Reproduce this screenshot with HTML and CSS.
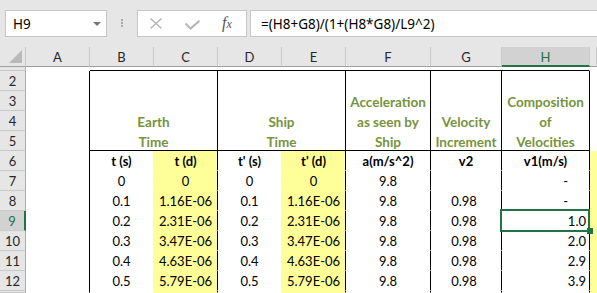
FILE: index.html
```html
<!DOCTYPE html>
<html lang="en">
<head>
    <meta charset="UTF-8">
    <title>Relativistic velocities</title>
    <link rel="stylesheet" href="styles.css">
</head>
<body>
<div class="formula-bar">
    <div class="name-box">
        <span>H9</span>
        <span class="caret"></span>
    </div>
    <div class="grip"><i></i><i></i><i></i></div>
    <div class="fx-buttons">
        <svg class="icon-cancel" width="12" height="11" viewBox="0 0 12 11">
            <path d="M0.5 0.5 L11.5 10.5 M11.5 0.5 L0.5 10.5" stroke="#b0b0b0" stroke-width="1.2" fill="none"/>
        </svg>
        <svg class="icon-enter" width="15" height="10" viewBox="0 0 15 10">
            <path d="M0.5 3.5 L5.5 8.6 L14.5 0.8" stroke="#b4b4b4" stroke-width="2" fill="none"/>
        </svg>
        <span class="fx"><i>f</i><i class="fx-x">x</i></span>
    </div>
    <div class="formula-input">=(H8+G8)/(1+(H8*G8)/L9^2)</div>
</div>

<div class="sheet">
    <!-- column headers -->
    <div class="corner">
        <svg width="13" height="13" viewBox="0 0 13 13"><path d="M13 0 L13 13 L0 13 Z" fill="#b9b9b9"/></svg>
    </div>
    <div class="hd">A</div>
    <div class="hd">B</div>
    <div class="hd">C</div>
    <div class="hd">D</div>
    <div class="hd">E</div>
    <div class="hd">F</div>
    <div class="hd">G</div>
    <div class="hd hd-sel">H</div>
    <div class="hd"></div>

    <!-- row 1 (squeezed) -->
    <div class="rh"></div>
    <div class="c"></div>
    <div class="c top-edge"></div>
    <div class="c"></div>

    <!-- rows 2-5: titles -->
    <div class="rh">2</div>
    <div class="c col-a"></div>
    <div class="c title span-2 br bb"><span>Earth<br>Time</span></div>
    <div class="c title span-2 br bb"><span>Ship<br>Time</span></div>
    <div class="c title br bb"><span>Acceleration<br>as seen by<br>Ship</span></div>
    <div class="c title br bb"><span>Velocity<br>Increment</span></div>
    <div class="c title br bb"><span>Composition<br>of<br>Velocities</span></div>
    <div class="c title-rest"></div>
    <div class="rh">3</div>
    <div class="rh">4</div>
    <div class="rh">5</div>

    <!-- row 6: units -->
    <div class="rh">6</div>
    <div class="c unit by">t (s)</div>
    <div class="c unit yl br">t (d)</div>
    <div class="c unit by">t' (s)</div>
    <div class="c unit yl br">t' (d)</div>
    <div class="c unit br">a(m/s^2)</div>
    <div class="c unit br">v2</div>
    <div class="c unit br">v1(m/s)</div>
    <div class="c yl col-i"></div>

    <div class="rh">7</div>
    <div class="c num by">0</div>
    <div class="c num yl br">0</div>
    <div class="c num by">0</div>
    <div class="c num yl br">0</div>
    <div class="c num br">9.8</div>
    <div class="c num g br"></div>
    <div class="c right br"><span class="dash">-</span></div>

    <div class="rh">8</div>
    <div class="c num by">0.1</div>
    <div class="c num yl br">1.16E-06</div>
    <div class="c num by">0.1</div>
    <div class="c num yl br">1.16E-06</div>
    <div class="c num br">9.8</div>
    <div class="c num g br">0.98</div>
    <div class="c right br"><span class="dash">-</span></div>

    <div class="rh rh-sel">9</div>
    <div class="c num by">0.2</div>
    <div class="c num yl br">2.31E-06</div>
    <div class="c num by">0.2</div>
    <div class="c num yl br">2.31E-06</div>
    <div class="c num br">9.8</div>
    <div class="c num g br">0.98</div>
    <div class="c right br active">1.0</div>

    <div class="rh">10</div>
    <div class="c num by">0.3</div>
    <div class="c num yl br">3.47E-06</div>
    <div class="c num by">0.3</div>
    <div class="c num yl br">3.47E-06</div>
    <div class="c num br">9.8</div>
    <div class="c num g br">0.98</div>
    <div class="c right br">2.0</div>

    <div class="rh">11</div>
    <div class="c num by">0.4</div>
    <div class="c num yl br">4.63E-06</div>
    <div class="c num by">0.4</div>
    <div class="c num yl br">4.63E-06</div>
    <div class="c num br">9.8</div>
    <div class="c num g br">0.98</div>
    <div class="c right br">2.9</div>

    <div class="rh">12</div>
    <div class="c num by">0.5</div>
    <div class="c num yl br">5.79E-06</div>
    <div class="c num by">0.5</div>
    <div class="c num yl br">5.79E-06</div>
    <div class="c num br">9.8</div>
    <div class="c num g br">0.98</div>
    <div class="c right br">3.9</div>

    <!-- top of row 13, cut by the window -->
    <div class="rh"></div>
    <div class="c by"></div>
    <div class="c yl br"></div>
    <div class="c by"></div>
    <div class="c yl br"></div>
    <div class="c br"></div>
    <div class="c br"></div>
    <div class="c br"></div>
</div>
</body>
</html>
```

FILE: styles.css
```css
body {
    margin: 0;
    width: 597px;
    height: 293px;
    overflow: hidden;
    background-color: #fff;
    color: #000;
}

/* formula bar */
.formula-bar {
    height: 47px;
    box-sizing: border-box;
    padding-top: 10px;
    background-color: #e6e6e6;
    display: flex;
    align-items: flex-start;
    font-family: "Noto Sans", sans-serif;
    font-size: 13.5px;
}
.name-box {
    margin-left: 5px;
    width: 102px;
    height: 27px;
    box-sizing: border-box;
    border: 1px solid #c6c6c6;
    background-color: #fff;
    display: flex;
    align-items: center;
    padding-left: 7px;
}
.caret {
    margin-left: auto;
    margin-right: 5px;
    border-left: 4px solid transparent;
    border-right: 4px solid transparent;
    border-top: 4px solid #767676;
}
.grip {
    width: 30px;
    padding-top: 9px;
    display: flex;
    flex-direction: column;
    align-items: center;
    gap: 1px;
}
.grip i {
    display: block;
    width: 2px;
    height: 2px;
    background-color: #a9a9a9;
}
.fx-buttons {
    width: 110px;
    height: 27px;
    box-sizing: border-box;
    border: 1px solid #c6c6c6;
    background-color: #fff;
    display: flex;
    align-items: flex-start;
}
.icon-cancel {
    margin-left: 12px;
    margin-top: 7px;
}
.icon-enter {
    margin-left: 23px;
    margin-top: 9px;
}
.fx {
    margin-left: 22px;
    margin-top: 2px;
    font-family: "Liberation Serif", serif;
    color: #555;
    line-height: 20px;
}
.fx i {
    font-size: 16px;
}
.fx .fx-x {
    font-size: 12px;
}
.formula-input {
    flex: 1;
    margin-left: 3px;
    margin-right: -2px;
    height: 27px;
    box-sizing: border-box;
    border: 1px solid #c6c6c6;
    background-color: #fff;
    padding-left: 10px;
    display: flex;
    align-items: center;
    white-space: nowrap;
}

/* sheet grid */
.sheet {
    display: grid;
    grid-template-columns: 26px 64px 64px 64px 64px 64px 85px 71px 88px 1fr;
    grid-template-rows: 20px 4px repeat(11, 20px) 2px;
    overflow: hidden;
    font-family: Lato, sans-serif;
    font-size: 13px;
    line-height: 20px;
}
.sheet > div {
    box-sizing: border-box;
    white-space: nowrap;
}
.corner {
    background-color: #e6e6e6;
    border-right: 1px solid #c6c6c6;
    border-bottom: 1px solid #9e9e9e;
    display: flex;
    align-items: flex-end;
    justify-content: flex-end;
    padding: 0 3px 3px 0;
}
.hd {
    background-color: #e6e6e6;
    border-right: 1px solid #c9c9c9;
    border-bottom: 1px solid #9e9e9e;
    text-align: center;
    color: #262626;
}
.hd-sel {
    background-color: #d2d2d2;
    border-bottom: 2px solid #217346;
    color: #217346;
}
.rh {
    grid-column: 1;
    background-color: #e6e6e6;
    border-right: 1px solid #ababab;
    border-bottom: 1px solid #c9c9c9;
    text-align: center;
    color: #262626;
}
.rh-sel {
    background-color: #d2d2d2;
    border-right: 2px solid #217346;
    color: #217346;
}

/* cells */
.c {
    border-right: 1px solid transparent;
    border-bottom: 1px solid transparent;
}
.br {
    border-right-color: #000;
}
.bb {
    border-bottom-color: #000;
}
.by {
    border-right-color: #ffff99;
}
.yl {
    background-color: #ffff99;
}
.top-edge {
    grid-column: span 7;
    border-bottom-color: #000;
}
.col-a {
    grid-row: span 12;
    border-right-color: #000;
}
.col-i {
    grid-row: span 8;
}
.title-rest {
    grid-row: span 4;
}
.title {
    grid-row: span 4;
    display: flex;
    flex-direction: column;
    justify-content: flex-end;
    text-align: center;
    font-size: 13.5px;
    font-weight: bold;
    color: #76933c;
}
.title span {
    margin-bottom: -2px;
}
.span-2 {
    grid-column: span 2;
}
.unit {
    text-align: center;
    font-weight: bold;
}
.num {
    text-align: center;
}
.num.g {
    padding-right: 4px;
}
.right {
    text-align: right;
    padding-right: 3px;
}
.dash {
    padding-right: 18px;
}

/* active cell outline */
.active {
    position: relative;
}
.active::before {
    content: "";
    position: absolute;
    left: -2px;
    top: -2px;
    width: 90px;
    height: 23px;
    box-sizing: border-box;
    border: 2px solid #217346;
}
.active::after {
    content: "";
    position: absolute;
    left: 85px;
    top: 17px;
    width: 6px;
    height: 6px;
    background-color: #217346;
}
```
